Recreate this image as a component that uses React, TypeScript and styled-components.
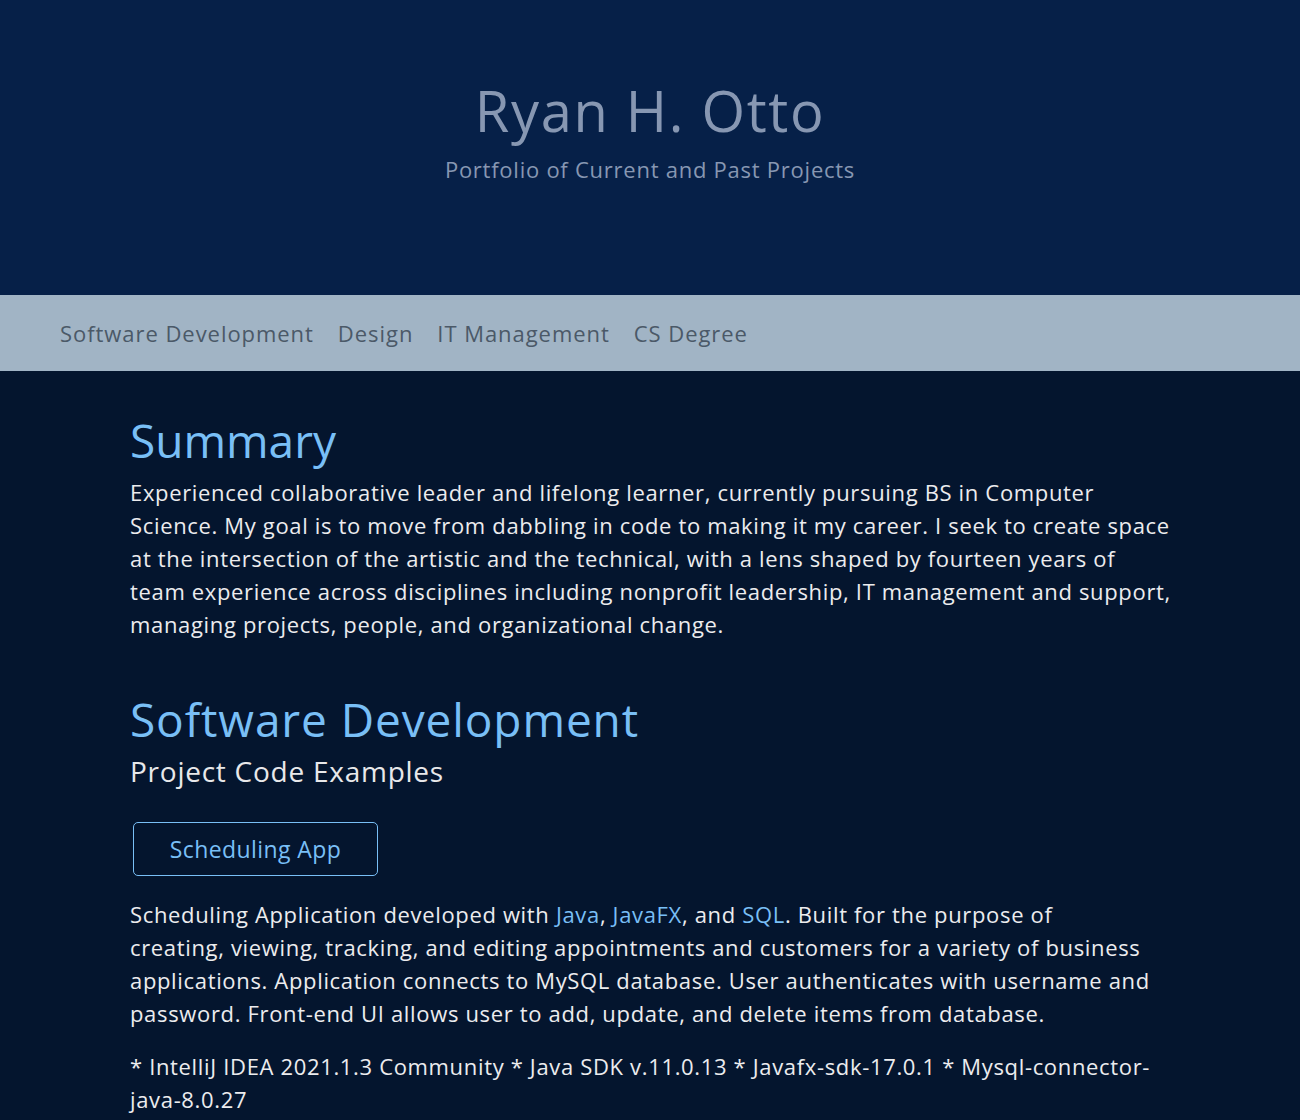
import React from "react";
import styled, { createGlobalStyle } from "styled-components";

const Global = createGlobalStyle`
  html, body { margin: 0; padding: 0; background: #04152e; }
  body { font-family: "Open Sans", "Noto Sans", sans-serif; }
  * { box-sizing: border-box; }
`;

const Header = styled.header`
  background: #062048;
  height: 295px;
  display: flex;
  flex-direction: column;
  align-items: center;
  padding-top: 77px;
`;

const Title = styled.h1`
  margin: 0;
  font-size: 56px;
  font-weight: 400;
  line-height: 66px;
  letter-spacing: 1.7px;
  color: #8797b2;
`;

const Subtitle = styled.p`
  margin: 12px 0 0;
  font-size: 22px;
  line-height: 28px;
  letter-spacing: 0.75px;
  color: #8797b2;
`;

const Nav = styled.nav`
  background: #a1b4c5;
  height: 76px;
  display: flex;
  align-items: center;
  gap: 24px;
  padding-left: 60px;
`;

const NavLink = styled.a`
  font-size: 22px;
  letter-spacing: 0.95px;
  color: #4b5968;
  text-decoration: none;
`;

const Main = styled.main`
  width: 1040px;
  margin: 0 auto;
  padding-top: 40px;
`;

const H2 = styled.h2<{ $top?: number; $spacing?: number }>`
  margin: ${(p) => p.$top ?? 0}px 0 0;
  font-size: 46px;
  font-weight: 400;
  line-height: 58px;
  letter-spacing: ${(p) => p.$spacing ?? 0.5}px;
  color: #79bff6;
`;

const H3 = styled.h3`
  margin: 6px 0 0;
  font-size: 28px;
  font-weight: 400;
  line-height: 34px;
  letter-spacing: 0.75px;
  color: #e8e8ea;
`;

const P = styled.p<{ $top?: number }>`
  margin: ${(p) => p.$top ?? 0}px 0 0;
  font-size: 22px;
  line-height: 33px;
  letter-spacing: 0.66px;
  white-space: nowrap;
  color: #ececee;
`;

const Link = styled.a`
  color: #79bff6;
  text-decoration: none;
`;

const Button = styled.a`
  display: inline-flex;
  align-items: center;
  justify-content: center;
  width: 245px;
  height: 54px;
  margin: 34px 0 0 3px;
  border: 1px solid #79bff6;
  border-radius: 5px;
  font-size: 23px;
  letter-spacing: 0.4px;
  color: #79bff6;
  text-decoration: none;
`;

export default function App() {
  return (
    <>
      <Global />
      <Header>
        <Title>Ryan H. Otto</Title>
        <Subtitle>Portfolio of Current and Past Projects</Subtitle>
      </Header>
      <Nav>
        <NavLink href="#">Software Development</NavLink>
        <NavLink href="#">Design</NavLink>
        <NavLink href="#">IT Management</NavLink>
        <NavLink href="#">CS Degree</NavLink>
      </Nav>
      <Main>
        <H2 $spacing={0}>Summary</H2>
        <P $top={7}>
          Experienced collaborative leader and lifelong learner, currently pursuing BS in Computer
          <br />
          Science. My goal is to move from dabbling in code to making it my career. I seek to create space
          <br />
          at the intersection of the artistic and the technical, with a lens shaped by fourteen years of
          <br />
          team experience across disciplines including nonprofit leadership, IT management and support,
          <br />
          managing projects, people, and organizational change.
        </P>
        <H2 $top={49} $spacing={0.9}>Software Development</H2>
        <H3>Project Code Examples</H3>
        <Button href="#">Scheduling App</Button>
        <P $top={22}>
          Scheduling Application developed with <Link href="#">Java</Link>,{" "}
          <Link href="#">JavaFX</Link>, and <Link href="#">SQL</Link>. Built for the purpose of
          <br />
          creating, viewing, tracking, and editing appointments and customers for a variety of business
          <br />
          applications. Application connects to MySQL database. User authenticates with username and
          <br />
          password. Front-end UI allows user to add, update, and delete items from database.
        </P>
        <P $top={20}>
          * IntelliJ IDEA 2021.1.3 Community * Java SDK v.11.0.13 * Javafx-sdk-17.0.1 * Mysql-connector-
          <br />
          java-8.0.27
        </P>
      </Main>
    </>
  );
}
